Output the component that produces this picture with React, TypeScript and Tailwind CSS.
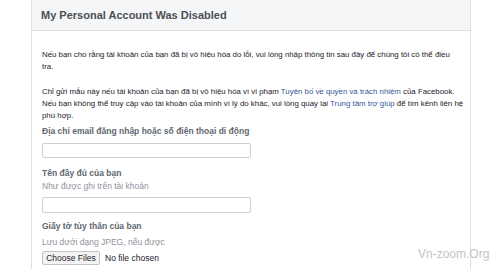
import React from "react";

export default function App() {
    return (
        <div className="relative h-[269px] w-[500px] overflow-hidden bg-white font-['Liberation_Sans',Arial,sans-serif]">
            <div className="ml-[31px] flex h-full w-[440px] flex-col border-x border-[#dddfe2]">
                <div className="flex h-[31px] shrink-0 items-center border-b border-[#dddfe2] bg-[#f5f6f7] px-[9px] text-[11px] font-bold text-[#4b4f56]">
                    My Personal Account Was Disabled
                </div>

                <div className="whitespace-nowrap px-[10px] pt-[18px] text-[7.85px] leading-[12px] text-[#1d2129]">
                    <p>
                        Nếu bạn cho rằng tài khoản của bạn đã bị vô hiệu hóa do lỗi, vui lòng nhập thông tin sau đây để chúng tôi có thể điều
                        <br/>tra.
                    </p>
                    <p className="mt-[13px]">
                        Chỉ gửi mẫu này nếu tài khoản của bạn đã bị vô hiệu hóa vì vi phạm <span className="text-[#365899]">Tuyên bố về quyền và trách nhiệm</span> của Facebook.
                        <br/>Nếu bạn không thể truy cập vào tài khoản của mình vì lý do khác, vui lòng quay lại <span className="text-[#365899]">Trung tâm trợ giúp</span> để tìm kênh liên hệ
                        <br/>phù hợp.
                    </p>

                    <div className="mt-[3px] text-[8.5px] leading-[12px] font-bold text-[#606770]">
                        Địa chỉ email đăng nhập hoặc số điện thoại di động
                    </div>
                    <div className="mt-[6px] h-[15px] w-[209px] rounded-[2px] border border-[#ccd0d5] bg-white"/>

                    <div className="mt-[9px] text-[8.5px] leading-[12px] font-bold text-[#606770]">Tên đầy đủ của bạn</div>
                    <div className="mt-[1px] text-[8.5px] leading-[12px] text-[#90949c]">Như được ghi trên tài khoản</div>
                    <div className="mt-[5px] h-[16px] w-[209px] rounded-[2px] border border-[#ccd0d5] bg-white"/>

                    <div className="mt-[7px] text-[8.5px] leading-[12px] font-bold text-[#606770]">Giấy tờ tùy thân của bạn</div>
                    <div className="mt-[4px] text-[8.5px] leading-[12px] text-[#90949c]">Lưu dưới dạng JPEG, nếu được</div>
                    <div className="mt-[3px] flex items-center gap-[5px] text-[8.5px] text-[#1d2129]">
                        <span className="flex h-[14px] w-[58px] items-center justify-center rounded-[2px] border border-[#c4c4c4] bg-[#f3f3f3]">
                            Choose Files
                        </span>
                        <span>No file chosen</span>
                    </div>
                </div>
            </div>

            <div className="absolute left-[418px] top-[246px] text-[12px] leading-[16px] text-[#c2c4c7]">
                Vn-zoom.Org
            </div>
        </div>
    );
}
